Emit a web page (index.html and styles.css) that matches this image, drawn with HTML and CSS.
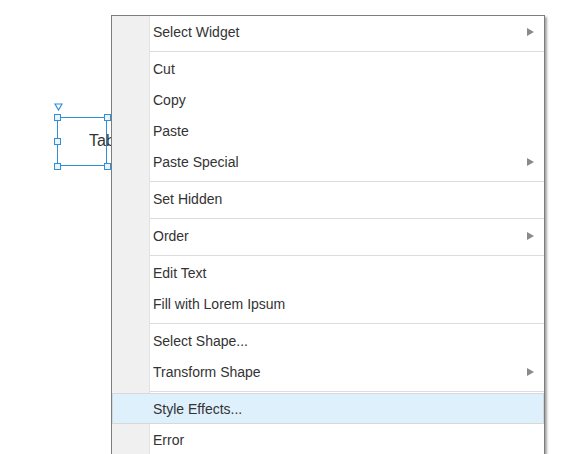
FILE: index.html
```html
<!DOCTYPE html>
<html>
<head>
<meta charset="utf-8">
<link rel="stylesheet" href="styles.css">
</head>
<body>
<div class="canvas">
  <div class="widget">
    <svg class="anchor" width="9" height="8" viewBox="0 0 9 8"><path d="M1 1 H8 L4.5 7 Z" fill="#fff" stroke="#2f8fd8" stroke-width="1.2"/></svg>
    <div class="box"><span class="label">Table</span></div>
    <span class="handle h-tl"></span>
    <span class="handle h-tr"></span>
    <span class="handle h-ml"></span>
    <span class="handle h-bl"></span>
    <span class="handle h-br"></span>
  </div>

  <div class="menu">
    <div class="item sub"><span>Select Widget</span><i class="arrow"></i></div>
    <div class="sep"></div>
    <div class="item"><span>Cut</span></div>
    <div class="item"><span>Copy</span></div>
    <div class="item"><span>Paste</span></div>
    <div class="item sub"><span>Paste Special</span><i class="arrow"></i></div>
    <div class="sep"></div>
    <div class="item"><span>Set Hidden</span></div>
    <div class="sep"></div>
    <div class="item sub"><span>Order</span><i class="arrow"></i></div>
    <div class="sep"></div>
    <div class="item"><span>Edit Text</span></div>
    <div class="item"><span>Fill with Lorem Ipsum</span></div>
    <div class="sep"></div>
    <div class="item"><span>Select Shape...</span></div>
    <div class="item sub"><span>Transform Shape</span><i class="arrow"></i></div>
    <div class="sep"></div>
    <div class="item active"><span>Style Effects...</span></div>
    <div class="item"><span>Error</span></div>
  </div>
</div>
</body>
</html>
```
FILE: styles.css
```css
html, body {
  margin: 0;
  padding: 0;
  background: #fff;
  overflow: hidden;
}
body {
  width: 588px;
  height: 454px;
  font-family: "Liberation Sans", Arial, sans-serif;
  color: #333;
}
.canvas {
  position: relative;
  width: 588px;
  height: 454px;
  overflow: hidden;
}
.widget {
  position: absolute;
  left: 54px;
  top: 103px;
  width: 60px;
  height: 70px;
}
.anchor {
  position: absolute;
  left: -0.5px;
  top: 0;
  display: block;
}
.box {
  position: absolute;
  left: 3px;
  top: 14px;
  width: 50px;
  height: 49px;
  border: 1.5px solid #2f8fd8;
  box-sizing: border-box;
}
.label {
  position: absolute;
  left: 31px;
  top: 14px;
  font-size: 16px;
  color: #333;
  white-space: nowrap;
}
.handle {
  position: absolute;
  width: 7px;
  height: 7px;
  box-sizing: border-box;
  border: 1px solid #2f8fd8;
  background: #eef3f8;
}
.h-tl { left: 0; top: 11px; }
.h-tr { left: 50px; top: 11px; }
.h-ml { left: 0; top: 35px; }
.h-bl { left: 0; top: 60px; }
.h-br { left: 50px; top: 60px; }

.menu {
  position: absolute;
  left: 111px;
  top: 15px;
  width: 432px;
  border: 1px solid #7d7d7d;
  background: linear-gradient(to right, #f0f0f0 0 37px, #e3e3e3 37px 38px, #fff 38px);
  box-shadow: 2px 2px 2px rgba(0, 0, 0, 0.35);
  font-size: 14px;
}
.item {
  display: flex;
  align-items: center;
  justify-content: space-between;
  height: 31px;
  padding: 0 10px 0 41px;
  box-sizing: border-box;
}
.arrow {
  width: 0;
  height: 0;
  border-left: 7px solid #8a8a8a;
  border-top: 4.5px solid transparent;
  border-bottom: 4.5px solid transparent;
}
.sep {
  height: 1px;
  margin: 4px 0 1px 38px;
  background: #dcdcdc;
}
.item.active {
  background: #dff0fd;
  border: 1px solid #d8d8d8;
  padding-left: 40px;
}
```
